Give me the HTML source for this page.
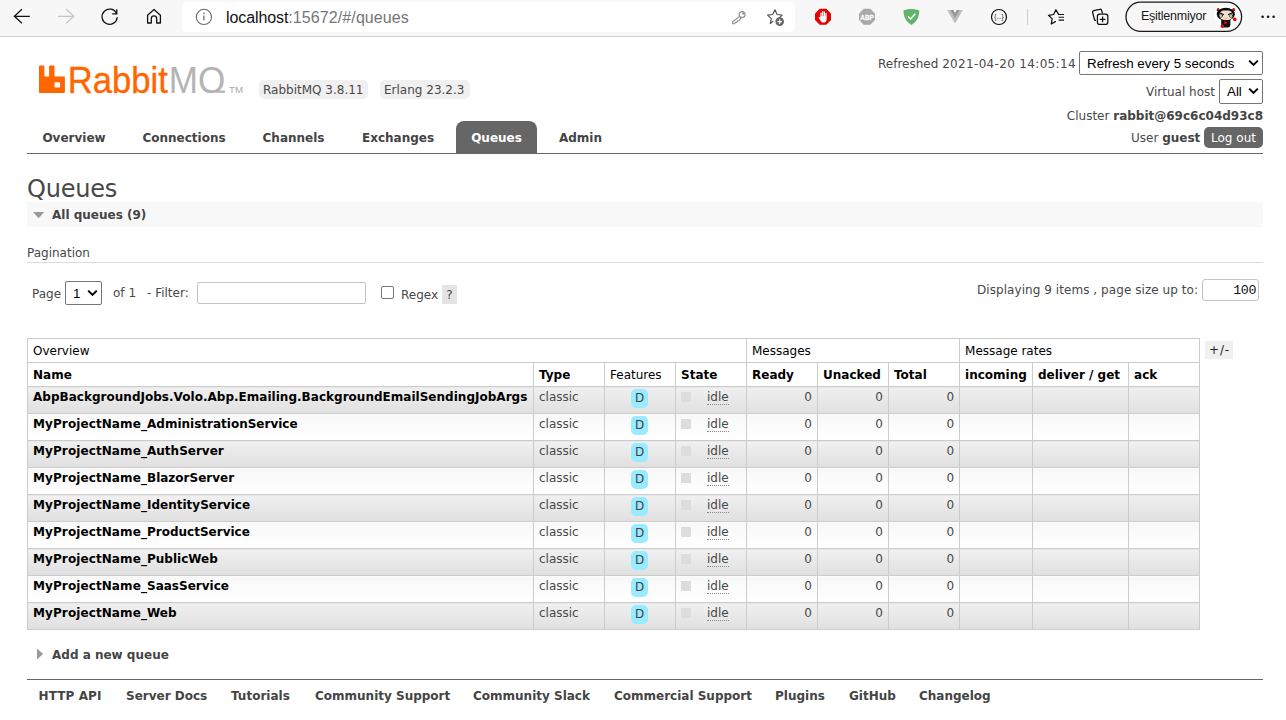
<!DOCTYPE html>
<html lang="en">
<head>
<meta charset="utf-8">
<title>RabbitMQ Management</title>
<style>
html,body{margin:0;padding:0;}
body{width:1286px;height:720px;overflow:hidden;background:#fff;position:relative;
  font:12px "DejaVu Sans","Liberation Sans",sans-serif;color:#484848;}
*{box-sizing:border-box;}
.abs{position:absolute;white-space:nowrap;}
b,.b{font-weight:bold;}
/* ---------- browser chrome ---------- */
#chrome{position:absolute;left:0;top:0;width:1286px;height:37px;background:#f7f7f7;border-bottom:1px solid #d2d2d2;}
#urlbar{position:absolute;left:182px;top:2px;width:613px;height:30px;background:#fff;border-radius:5px;}
#url{position:absolute;left:226px;top:8.5px;font:16px "Liberation Sans",sans-serif;color:#767676;letter-spacing:0.1px;white-space:nowrap;}
#url span{color:#111;letter-spacing:-0.1px;}
#profile{position:absolute;left:1141px;top:9px;font:12.5px "Liberation Sans",sans-serif;color:#1a1a1a;white-space:nowrap;letter-spacing:-0.25px;}
#chrome svg{position:absolute;overflow:visible;}
/* ---------- page ---------- */
#versions span{position:absolute;top:80px;height:19px;background:#f0f0f0;border-radius:5px;padding:3px 5px 0 4px;white-space:nowrap;}
#menu a{position:absolute;top:121px;height:32px;padding:10px 0 0 0;text-align:center;font-weight:bold;color:#444;white-space:nowrap;}
#menu a.sel{background:#666;color:#fff;border-radius:8px 8px 0 0;}
#menuline{position:absolute;left:27px;top:153px;width:1236px;height:1px;background:#666;}
.r{position:absolute;white-space:nowrap;text-align:right;right:23px;}
.sel-box{position:absolute;border:1px solid #767676;border-radius:2px;background:#fff;color:#000;font:13.33px "Liberation Sans",sans-serif;white-space:nowrap;}
h1{position:absolute;left:27px;top:174px;margin:0;letter-spacing:-0.2px;font-size:24px;font-weight:normal;color:#484848;line-height:30px;}
#secbar{position:absolute;left:27px;top:202px;width:1236px;height:25px;background:#f8f8f8;}
#footline{position:absolute;left:27px;top:679px;width:1236px;height:1px;background:#666;}
#footer a{position:absolute;top:689px;font-weight:bold;color:#444;white-space:nowrap;}
/* ---------- table ---------- */
table{position:absolute;left:27px;top:338px;border-collapse:collapse;table-layout:fixed;width:1173px;}
th,td{border:1px solid #ccc;padding:0 0 0 5px;text-align:left;vertical-align:top;overflow:hidden;white-space:nowrap;}
thead tr{height:24px;}
thead th{font-weight:normal;padding-top:5px;line-height:14px;color:#000;}
thead tr.h2 th{font-weight:bold;color:#000;}
thead tr.h2 th.n{font-weight:normal;}
tbody tr{height:27px;}
tbody td{padding-top:3px;line-height:14px;}
tbody tr.alt1 td{background:linear-gradient(#f0f0f0,#e0e0e0);}
tbody tr.alt2 td{background:linear-gradient(#f8f8f8,#ffffff);}
td.num{text-align:right;padding-right:5px;}
td.nm{font-weight:bold;color:#000;}
td.nm .p{letter-spacing:0.1px;}
.feat{display:block;width:17px;height:19px;border-radius:5px;background:#99ebff;color:#444;text-align:center;line-height:19px;margin:-1px 0 0 21px;}
.sq{display:inline-block;width:10px;height:10px;background:#ddd;margin:2px 16px 0 0;vertical-align:top;}
.idle{border-bottom:1px dotted #888;display:inline-block;line-height:14px;}
</style>
</head>
<body>

<!-- browser toolbar -->
<div id="chrome">
  <div id="urlbar"></div>
  <div id="url"><span>localhost</span>:15672/#/queues</div>
  <div id="profile">Eşitlenmiyor</div>

  <svg width="1286" height="36" viewBox="0 0 1286 36" style="left:0;top:0;" fill="none" stroke-linecap="round" stroke-linejoin="round">
    <!-- back -->
    <path d="M29.8 16.3H14.4M21.9 9.3L14.4 16.3L21.9 23.3" stroke="#111" stroke-width="1.25" stroke-linecap="butt" stroke-linejoin="miter"/>
    <!-- forward -->
    <path d="M58 16.3H73.8M66.3 9.3L73.8 16.3L66.3 23.3" stroke="#c6c6c6" stroke-width="1.25" stroke-linecap="butt" stroke-linejoin="miter"/>
    <!-- reload -->
    <path d="M116.6 13.6A7.6 7.6 0 1 0 117.2 17.6" stroke="#111" stroke-width="1.25"/>
    <path d="M116.8 9.2V13.9H112.2" stroke="#111" stroke-width="1.25" stroke-linecap="butt" stroke-linejoin="miter"/>
    <!-- home -->
    <path d="M147.6 23H151.3V18.6A2.7 2.7 0 0 1 156.7 18.6V23H160.4V15.3L154 9.5L147.6 15.3Z" stroke="#111" stroke-width="1.3"/>
    <!-- info -->
    <circle cx="203.9" cy="16.9" r="7.6" stroke="#6a6a6a" stroke-width="1.1"/>
    <path d="M203.9 15.6V20.3" stroke="#6a6a6a" stroke-width="1.3" stroke-linecap="butt"/>
    <circle cx="203.9" cy="13.4" r="0.8" fill="#6a6a6a"/>
    <!-- key -->
    <g stroke="#8c8c8c" stroke-width="1.1">
      <circle cx="742.1" cy="14.6" r="3"/>
      <path d="M739.7 16.4L732.6 21.8V23.7H734.6L735.4 22.4H736.9L737.5 20.9L739.2 20.5L741.3 17.6"/>
      <circle cx="743.1" cy="13.6" r="0.5" fill="#8c8c8c"/>
    </g>
    <!-- star + -->
    <path d="M774.9 9.8L777.1 14.5L782.2 15.1L778.5 18.6M773 21.3L770.3 23.6L771.3 18.6L767.6 15.1L772.7 14.5L774.9 9.8" stroke="#555" stroke-width="1.2"/>
    <circle cx="779.7" cy="21.6" r="4.3" fill="#666"/>
    <path d="M777.4 21.6H782M779.7 19.3V23.9" stroke="#fff" stroke-width="1.1" stroke-linecap="butt"/>
    <!-- stop hand (red octagon) -->
    <path d="M819.7 8.8H826.3L831 13.5V20.1L826.3 24.8H819.7L815 20.1V13.5Z" fill="#e40000"/>
    <path d="M821 17V13M822.7 16.6V11.6M824.4 16.6V11.9M826 17V13.4" stroke="#fff" stroke-width="1.25" stroke-linecap="round"/>
    <path d="M820.4 16.2H826.6V19.2C826.6 21.4 825.2 22.6 823.6 22.6C822 22.6 821.2 21.8 820.4 20.4L818.6 17.6C818.4 16.8 819.4 16.6 820.4 17.6Z" fill="#fff"/>
    <!-- ABP -->
    <path d="M863.7 8.8H870.3L875 13.5V20.1L870.3 24.8H863.7L859 20.1V13.5Z" fill="#a9a9a9"/>
    <!-- shield -->
    <path d="M911.4 9C914.4 9 917.4 9.6 919.3 10.6C919.3 16.6 917 22 911.4 24.9C905.8 22 903.5 16.6 903.5 10.6C905.4 9.6 908.4 9 911.4 9Z" fill="#62b46a"/>
    <path d="M908 16.4L910.6 19L915.3 13.8" stroke="#fff" stroke-width="1.5" stroke-linecap="butt" stroke-linejoin="miter"/>
    <!-- vue -->
    <path d="M947.2 10H951.2L955 16.6L958.8 10H962.8L955 23.6Z" fill="#bcbcbc"/>
    <path d="M950.4 10H953.3L955 13L956.7 10H959.6L955 18Z" fill="#979797"/>
    <!-- {...} -->
    <circle cx="999" cy="17" r="7.5" stroke="#111" stroke-width="1.2"/>
    <!-- separator -->
    <path d="M1027.5 9V25" stroke="#cdcdcd" stroke-width="1" stroke-linecap="butt"/>
    <!-- favourites -->
    <path d="M1058.6 14.4L1055.9 9.7L1053.6 14.5L1048.5 15.3L1052.2 18.9L1051.2 24L1055.4 21.6" stroke="#111" stroke-width="1.25"/>
    <path d="M1058.6 14.5H1064M1058.6 17.3H1064M1058.6 20.1H1064" stroke="#111" stroke-width="1.1" stroke-linecap="butt"/>
    <!-- collections -->
    <path d="M1095.4 20.4L1094.6 19.9L1092.6 12.6A1.6 1.6 0 0 1 1093.7 10.7L1099.6 9.3A1.6 1.6 0 0 1 1101.6 10.4L1102.4 13" stroke="#111" stroke-width="1.3"/>
    <rect x="1097.4" y="14.2" width="10.4" height="10.2" rx="2.2" stroke="#111" stroke-width="1.25"/>
    <path d="M1099.8 19.4H1105.4M1102.6 16.6V22.2" stroke="#111" stroke-width="1.2" stroke-linecap="butt"/>
    <!-- profile pill -->
    <rect x="1126" y="2.2" width="115.6" height="29.2" rx="14.6" stroke="#1a1a1a" stroke-width="1.3"/>
    <circle cx="1225.8" cy="17" r="11.6" fill="#fff"/>
    <!-- avatar -->
    <circle cx="1218.2" cy="9.2" r="1.2" fill="#d80000"/>
    <circle cx="1233.6" cy="9.2" r="1.2" fill="#d80000"/>
    <path d="M1217 10.4L1220.4 11.6M1234.8 10.4L1231.4 11.6" stroke="#111" stroke-width="0.9"/>
    <rect x="1221.2" y="18" width="9.2" height="9.4" rx="2.4" fill="#111"/>
    <ellipse cx="1225.8" cy="14.2" rx="9" ry="6.5" fill="#0a0a0a"/>
    <rect x="1219.4" y="10.4" width="13.4" height="9.5" rx="4.6" fill="#f6dfcc"/>
    <circle cx="1220.9" cy="15.7" r="1.7" fill="#fff" stroke="#222" stroke-width="0.7"/>
    <circle cx="1231" cy="15.7" r="1.7" fill="#fff" stroke="#222" stroke-width="0.7"/>
    <circle cx="1221" cy="15.7" r="0.7" fill="#888"/>
    <circle cx="1230.9" cy="15.7" r="0.7" fill="#888"/>
    <path d="M1219.6 12.8L1223.4 14.6M1232.3 12.8L1228.5 14.6" stroke="#111" stroke-width="1.1"/>
    <path d="M1225 18.3H1226.6" stroke="#c9a090" stroke-width="0.8"/>
    <circle cx="1225.4" cy="22.7" r="1.4" fill="#e80000"/>
    <circle cx="1234.8" cy="19.4" r="1.8" fill="#f00000"/>
    <circle cx="1222.3" cy="26.2" r="1.7" fill="#f00000"/>
    <!-- menu dots -->
    <circle cx="1262.6" cy="16.8" r="1.25" fill="#111"/>
    <circle cx="1268.1" cy="16.8" r="1.25" fill="#111"/>
    <circle cx="1273.6" cy="16.8" r="1.25" fill="#111"/>
    <text x="867" y="19.8" text-anchor="middle" font-family="Liberation Sans, sans-serif" font-weight="bold" font-size="7.8" fill="#fff" stroke="#fff" stroke-width="0.3" textLength="13.4" lengthAdjust="spacingAndGlyphs">ABP</text>
    <text x="999" y="19" text-anchor="middle" font-family="Liberation Sans, sans-serif" font-size="6.4" fill="#111" stroke="none" textLength="9.4" lengthAdjust="spacingAndGlyphs">{...}</text>
  </svg>
</div>

<!-- logo -->
<svg id="logo" width="230" height="44" viewBox="30 58 230 44" style="position:absolute;left:30px;top:58px;overflow:visible;">
  <path d="M39.9 65.4H43.5Q44.4 65.4 44.4 66.3V75.6Q44.4 76.6 45.4 76.6H48.2Q49.1 76.6 49.1 75.6V66.3Q49.1 65.4 50 65.4H53.6Q54.5 65.4 54.5 66.3V75.6Q54.5 76.6 55.5 76.6H63.9Q64.9 76.6 64.9 77.6V92Q64.9 93 63.9 93H39.9Q39 93 39 92V66.3Q39 65.4 39.9 65.4ZM55.3 82.2Q54.5 82.2 54.5 83V86.7Q54.5 87.5 55.3 87.5H59.3Q60.1 87.5 60.1 86.7V83Q60.1 82.2 59.3 82.2Z" fill="#ff6600" fill-rule="evenodd"/>
  <text x="67.8" y="92.7" font-family="Liberation Sans, sans-serif" font-size="37.6" fill="#ff6600" stroke="#ff6600" stroke-width="0.35" textLength="100" lengthAdjust="spacingAndGlyphs">Rabbit</text>
  <clipPath id="qclip"><rect x="160" y="58" width="70" height="35.1"/></clipPath>
  <path d="M216 91.7H225.2" stroke="#b4b4b4" stroke-width="2.2" fill="none"/>
  <text clip-path="url(#qclip)" x="168.8" y="92.7" font-family="Liberation Sans, sans-serif" font-size="37.6" fill="#b4b4b4" textLength="56.5" lengthAdjust="spacingAndGlyphs">MQ</text>
  <text x="229" y="92.7" font-family="Liberation Sans, sans-serif" font-size="9" fill="#a8a8a8" textLength="14" lengthAdjust="spacingAndGlyphs">TM</text>
</svg>
<div id="versions">
  <span style="left:259px;width:109px;">RabbitMQ 3.8.11</span>
  <span style="left:380px;width:90px;">Erlang 23.2.3</span>
</div>

<!-- menu -->
<div id="menu">
  <a style="left:27px;width:94px;">Overview</a>
  <a style="left:127px;width:114px;">Connections</a>
  <a style="left:247px;width:93px;">Channels</a>
  <a style="left:346px;width:104px;">Exchanges</a>
  <a class="sel" style="left:456px;width:81px;">Queues</a>
  <a style="left:543px;width:75px;">Admin</a>
</div>
<div id="menuline"></div>

<!-- right status -->
<div class="abs" style="left:878px;top:57px;">Refreshed <span style="letter-spacing:0.33px;">2021-04-20 14:05:14</span></div>
<div class="sel-box" style="left:1079px;top:51px;width:184px;height:24px;padding:4px 0 0 7px;">Refresh every 5 seconds<svg class="chev" width="11" height="8" viewBox="0 0 11 8" style="position:absolute;right:3.3px;top:7.3px;"><path d="M1.2 1.6L5.5 5.9L9.8 1.6" fill="none" stroke="#000" stroke-width="2"/></svg></div>
<div class="abs" style="left:1146px;top:85px;">Virtual host</div>
<div class="sel-box" style="left:1219px;top:79px;width:44px;height:25px;padding:4px 0 0 7px;">All<svg class="chev" width="11" height="8" viewBox="0 0 11 8" style="position:absolute;right:3.3px;top:7.3px;"><path d="M1.2 1.6L5.5 5.9L9.8 1.6" fill="none" stroke="#000" stroke-width="2"/></svg></div>
<div class="r" style="top:109px;">Cluster <b style="color:#444">rabbit@69c6c04d93c8</b></div>
<div class="abs" style="left:1131px;top:131px;">User <b style="color:#444">guest</b></div>
<div class="abs" style="left:1204px;top:127px;width:59px;height:21px;background:#666;color:#fff;border-radius:5px;text-align:center;padding-top:4px;">Log out</div>

<h1>Queues</h1>
<div id="secbar"></div>
<div class="abs b" style="left:52px;top:208px;color:#444;">All queues (9)</div>
<svg class="abs" style="left:32px;top:210px;" width="14" height="10" viewBox="32 210 14 10"><path d="M33 212H44.2L38.6 218.3Z" fill="#999"/></svg>

<div class="abs" style="left:27px;top:246px;">Pagination</div>
<div class="abs" style="left:27px;top:262px;width:1236px;height:1px;background:#ddd;"></div>

<div class="abs" style="left:32px;top:287px;">Page</div>
<div class="sel-box" style="left:65px;top:281px;width:37px;height:24px;padding:4px 0 0 7px;">1<svg class="chev" width="11" height="8" viewBox="0 0 11 8" style="position:absolute;right:3.3px;top:7.3px;"><path d="M1.2 1.6L5.5 5.9L9.8 1.6" fill="none" stroke="#000" stroke-width="2"/></svg></div>
<div class="abs" style="left:113px;top:286px;">of 1</div>
<div class="abs" style="left:147px;top:286px;">- Filter:</div>
<div class="abs" style="left:197px;top:282px;width:169px;height:22px;border:1px solid #c4c4c4;border-radius:2px;background:#fff;"></div>
<div class="abs" style="left:381px;top:286px;width:13px;height:13px;border:1px solid #767676;border-radius:2px;background:#fff;"></div>
<div class="abs" style="left:401px;top:288px;">Regex</div>
<div class="abs" style="left:442px;top:285px;width:15px;height:19px;background:#e4e4e4;text-align:center;padding-top:3px;">?</div>
<div class="abs" style="left:977px;top:283px;letter-spacing:0.06px;">Displaying 9 items , page size up to:</div>
<div class="abs" style="left:1202px;top:279px;width:57px;height:22px;border:1px solid #c4c4c4;border-radius:3px;background:#fff;text-align:right;padding:3px 2px 0 0;color:#111;font:13.33px 'Liberation Mono',monospace;letter-spacing:-0.4px;">100</div>

<table>
<colgroup><col style="width:506px"><col style="width:71px"><col style="width:71px"><col style="width:71px"><col style="width:71px"><col style="width:71px"><col style="width:71px"><col style="width:73px"><col style="width:96px"><col style="width:71px"></colgroup>
<thead>
<tr><th colspan="4">Overview</th><th colspan="3">Messages</th><th colspan="3">Message rates</th></tr>
<tr class="h2"><th>Name</th><th>Type</th><th class="n">Features</th><th>State</th><th>Ready</th><th>Unacked</th><th>Total</th><th>incoming</th><th>deliver / get</th><th>ack</th></tr>
</thead>
<tbody>
<tr class="alt1"><td class="nm" style="letter-spacing:0.02px;">AbpBackgroundJobs.Volo.Abp.Emailing.BackgroundEmailSendingJobArgs</td><td>classic</td><td><span class="feat">D</span></td><td><span class="sq"></span><span class="idle">idle</span></td><td class="num">0</td><td class="num">0</td><td class="num">0</td><td></td><td></td><td></td></tr>
<tr class="alt2"><td class="nm"><span class="p">MyProjectName_</span>AdministrationService</td><td>classic</td><td><span class="feat">D</span></td><td><span class="sq"></span><span class="idle">idle</span></td><td class="num">0</td><td class="num">0</td><td class="num">0</td><td></td><td></td><td></td></tr>
<tr class="alt1"><td class="nm"><span class="p">MyProjectName_</span>AuthServer</td><td>classic</td><td><span class="feat">D</span></td><td><span class="sq"></span><span class="idle">idle</span></td><td class="num">0</td><td class="num">0</td><td class="num">0</td><td></td><td></td><td></td></tr>
<tr class="alt2"><td class="nm"><span class="p">MyProjectName_</span>BlazorServer</td><td>classic</td><td><span class="feat">D</span></td><td><span class="sq"></span><span class="idle">idle</span></td><td class="num">0</td><td class="num">0</td><td class="num">0</td><td></td><td></td><td></td></tr>
<tr class="alt1"><td class="nm"><span class="p">MyProjectName_</span>IdentityService</td><td>classic</td><td><span class="feat">D</span></td><td><span class="sq"></span><span class="idle">idle</span></td><td class="num">0</td><td class="num">0</td><td class="num">0</td><td></td><td></td><td></td></tr>
<tr class="alt2"><td class="nm"><span class="p">MyProjectName_</span>ProductService</td><td>classic</td><td><span class="feat">D</span></td><td><span class="sq"></span><span class="idle">idle</span></td><td class="num">0</td><td class="num">0</td><td class="num">0</td><td></td><td></td><td></td></tr>
<tr class="alt1"><td class="nm"><span class="p">MyProjectName_</span>PublicWeb</td><td>classic</td><td><span class="feat">D</span></td><td><span class="sq"></span><span class="idle">idle</span></td><td class="num">0</td><td class="num">0</td><td class="num">0</td><td></td><td></td><td></td></tr>
<tr class="alt2"><td class="nm"><span class="p">MyProjectName_</span>SaasService</td><td>classic</td><td><span class="feat">D</span></td><td><span class="sq"></span><span class="idle">idle</span></td><td class="num">0</td><td class="num">0</td><td class="num">0</td><td></td><td></td><td></td></tr>
<tr class="alt1"><td class="nm"><span class="p">MyProjectName_</span>Web</td><td>classic</td><td><span class="feat">D</span></td><td><span class="sq"></span><span class="idle">idle</span></td><td class="num">0</td><td class="num">0</td><td class="num">0</td><td></td><td></td><td></td></tr>
</tbody>
</table>
<div class="abs" style="left:1205px;top:341px;width:28px;height:18px;background:#f0f0f0;color:#222;letter-spacing:0.9px;text-align:center;padding:2px 0 0 1px;">+/-</div>

<svg class="abs" style="left:35px;top:647px;" width="10" height="14" viewBox="35 647 10 14"><path d="M37 648.6V659.6L43.1 654.1Z" fill="#999"/></svg>
<div class="abs b" style="left:52px;top:648px;color:#444;">Add a new queue</div>

<div id="footline"></div>
<div id="footer">
  <a style="left:38.5px;letter-spacing:0.1px;">HTTP API</a>
  <a style="left:126px;">Server Docs</a>
  <a style="left:231px;">Tutorials</a>
  <a style="left:315px;">Community Support</a>
  <a style="left:473px;">Community Slack</a>
  <a style="left:614px;">Commercial Support</a>
  <a style="left:775px;">Plugins</a>
  <a style="left:849px;">GitHub</a>
  <a style="left:919px;">Changelog</a>
</div>

</body>
</html>
